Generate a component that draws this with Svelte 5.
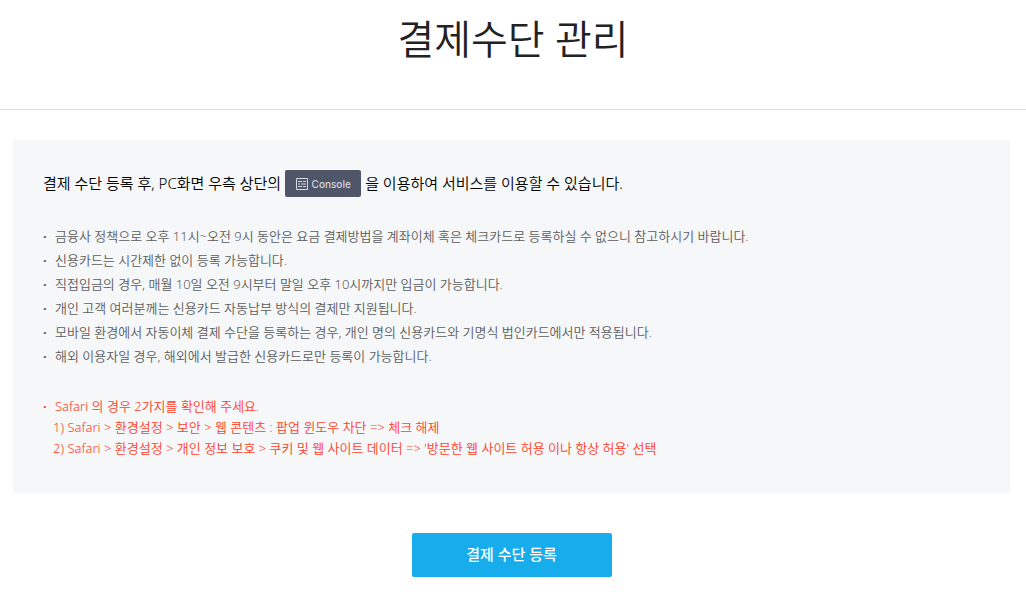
<script>
  const notes = [
    '금융사 정책으로 오후 11시~오전 9시 동안은 요금 결제방법을 계좌이체 혹은 체크카드로 등록하실 수 없으니 참고하시기 바랍니다.',
    '신용카드는 시간제한 없이 등록 가능합니다.',
    '직접입금의 경우, 매월 10일 오전 9시부터 말일 오후 10시까지만 입금이 가능합니다.',
    '개인 고객 여러분께는 신용카드 자동납부 방식의 결제만 지원됩니다.',
    '모바일 환경에서 자동이체 결제 수단을 등록하는 경우, 개인 명의 신용카드와 기명식 법인카드에서만 적용됩니다.',
    '해외 이용자일 경우, 해외에서 발급한 신용카드로만 등록이 가능합니다.'
  ];
</script>

<header><h1>결제수단 관리</h1></header>
<main>
  <section class="panel">
    <p class="lead">
      <span>결제 수단 등록 후, PC화면 우측 상단의</span>
      <span class="console">
        <svg width="12" height="12" viewBox="0 0 12 12" fill="none" stroke="currentColor" aria-hidden="true"><path d="M.5 .5h11v11H.5zM2 3.500h4M7 3.500h3M2 6h2M5 6h5M2 8.500h4M7 8.500h3" /></svg>
        Console
      </span>
      <span>을 이용하여 서비스를 이용할 수 있습니다.</span>
    </p>
    <ul>
      {#each notes as note}<li>{note}</li>{/each}
    </ul>
    <ul class="warning">
      <li>Safari 의 경우 2가지를 확인해 주세요.
        <ol>
          <li>1) Safari &gt; 환경설정 &gt; 보안 &gt; 웹 콘텐츠 : 팝업 윈도우 차단 =&gt; 체크 해제</li>
          <li>2) Safari &gt; 환경설정 &gt; 개인 정보 보호 &gt; 쿠키 및 웹 사이트 데이터 =&gt; '방문한 웹 사이트 허용 이나 항상 허용' 선택</li>
        </ol>
      </li>
    </ul>
  </section>
  <button type="button">결제 수단 등록</button>
</main>

<style>
  :global(body) { background: #fff; color: #222; font-family: "Noto Sans", "Noto Sans CJK KR", sans-serif; }
  header { border-bottom: 1px solid #ddd; padding: 7px 16px 38px; text-align: center; }
  h1 { margin: 0; font-size: 40px; line-height: 64px; font-weight: 350; }
  main { padding: 30px 16px 23px 13px; }
  .panel { background: #f5f7f9; padding: 28px 30px 34px; }
  .lead { display: flex; flex-wrap: wrap; align-items: center; gap: 4px; margin: 0; color: #000; font-size: 15px; line-height: 30px; font-weight: 350; }
  .console { display: inline-flex; align-items: center; justify-content: center; gap: 4px; box-sizing: border-box; width: 76px; height: 27px; padding-top: 2px; border-radius: 2px; background: #4f5669; color: #d5d8df; font: 500 10px/25px Inter, sans-serif; }
  ul, ol { list-style: none; margin: 0; padding: 0; }
  ul { margin-top: 26px; font-size: 13px; line-height: 24px; color: #5c5c5c; font-weight: 350; }
  ul > li { position: relative; padding-left: 12px; }
  ul > li::before { content: "·"; position: absolute; left: 0; font-weight: 700; }
  .warning { margin-top: 28px; color: #ff4026; line-height: 21px; }
  ol li { margin-left: -2px; }
  button { display: block; width: 200px; height: 44px; margin: 40px auto 0; padding: 0 0 2px; border: 0; border-radius: 2px; background: #17adec; color: #fff; font: 500 15px/42px "Noto Sans", "Noto Sans CJK KR", sans-serif; cursor: pointer; }
</style>
